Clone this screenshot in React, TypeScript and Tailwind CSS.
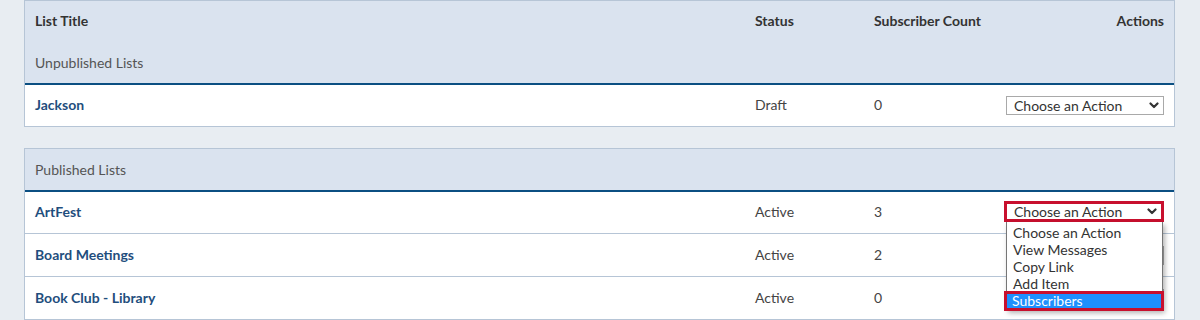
import { ReactNode } from "react";

const font = { fontFamily: "Lato, 'Open Sans', sans-serif" };

function Chevron() {
  return (
    <svg width="10" height="7" viewBox="0 0 10 7" className="shrink-0">
      <polyline points="1.5,1.5 5,5 8.5,1.5" fill="none" stroke="#333" strokeWidth="2.2" strokeLinecap="round" strokeLinejoin="round" />
    </svg>
  );
}

function ActionSelect() {
  return (
    <div className="w-[158px] h-[19px] border border-[#a9a9a9] bg-white flex items-center justify-between pl-[7px] pr-[4px] text-[14px] text-[#333]">
      <span>Choose an Action</span>
      <Chevron />
    </div>
  );
}

const options = ["Choose an Action", "View Messages", "Copy Link", "Add Item"];

function OpenSelect() {
  return (
    <div className="relative -top-[1px] w-[160px] h-[21px]">
      <div className="w-full h-full border-[3px] border-[#c8102e] bg-white flex items-center justify-between pl-[7px] pr-[4px] text-[14px] text-[#333]">
        <span>Choose an Action</span>
        <Chevron />
      </div>
      <div className="absolute left-0 top-[21px] w-[160px] z-10">
        <div className="ml-[2px] mr-[1px] bg-white border border-[#767676] border-t-0 shadow-[2px_3px_5px_rgba(0,0,0,0.3)] pt-[2px]">
          {options.map((o) => (
            <div key={o} className="h-[17px] leading-[17px] pl-[6px] text-[14px] text-[#333]">{o}</div>
          ))}
          <div className="h-[17px]" />
        </div>
        <div className="absolute left-0 top-[69px] w-[160px] h-[20px] border-[3px] border-[#c8102e]">
          <div className="h-full bg-[#1e90ff] text-white text-[14px] leading-[14px] pl-[5px]">Subscribers</div>
        </div>
      </div>
    </div>
  );
}

function Row({ title, status, count, action, h, last }: { title: string; status: string; count: string; action: ReactNode; h: string; last?: boolean }) {
  return (
    <div className={`grid grid-cols-[720px_119px_1fr] items-center ${h} px-[10px] bg-white ${last ? "" : "border-b border-[#b6c5d6]"}`}>
      <span className="font-bold text-[14px] text-[#1f4e7d] -mt-[2px]">{title}</span>
      <span className="text-[14px] text-[#444] -mt-[2px]">{status}</span>
      <div className="flex items-center justify-between">
        <span className="text-[14px] text-[#444] -mt-[2px]">{count}</span>
        {action}
      </div>
    </div>
  );
}

export default function App() {
  return (
    <div className="w-[1200px] h-[320px] bg-[#e8edf2] overflow-hidden" style={font}>
      <div className="ml-[24px] w-[1151px] flex flex-col">
        <div className="border border-[#b6c5d6]">
          <div className="bg-[#dae3ef] border-b-2 border-[#0b4f82]">
            <div className="grid grid-cols-[720px_119px_1fr] items-center h-[41px] px-[10px] pb-[2px] text-[14px] font-bold text-[#333]">
              <span>List Title</span>
              <span>Status</span>
              <div className="flex justify-between">
                <span>Subscriber Count</span>
                <span>Actions</span>
              </div>
            </div>
            <div className="h-[41px] flex items-center px-[10px] pb-[1px] text-[14px] text-[#555]">Unpublished Lists</div>
          </div>
          <Row title="Jackson" status="Draft" count="0" action={<ActionSelect />} h="h-[41px]" last />
        </div>

        <div className="mt-[21px] border border-[#b6c5d6]">
          <div className="bg-[#dae3ef] border-b-2 border-[#0b4f82] h-[43px] flex items-center px-[10px] pb-[1px] text-[14px] text-[#555]">Published Lists</div>
          <Row title="ArtFest" status="Active" count="3" action={<OpenSelect />} h="h-[42px]" />
          <Row title="Board Meetings" status="Active" count="2" action={<ActionSelect />} h="h-[43px]" />
          <Row title="Book Club - Library" status="Active" count="0" action={<ActionSelect />} h="h-[43px]" />
        </div>
      </div>
    </div>
  );
}
